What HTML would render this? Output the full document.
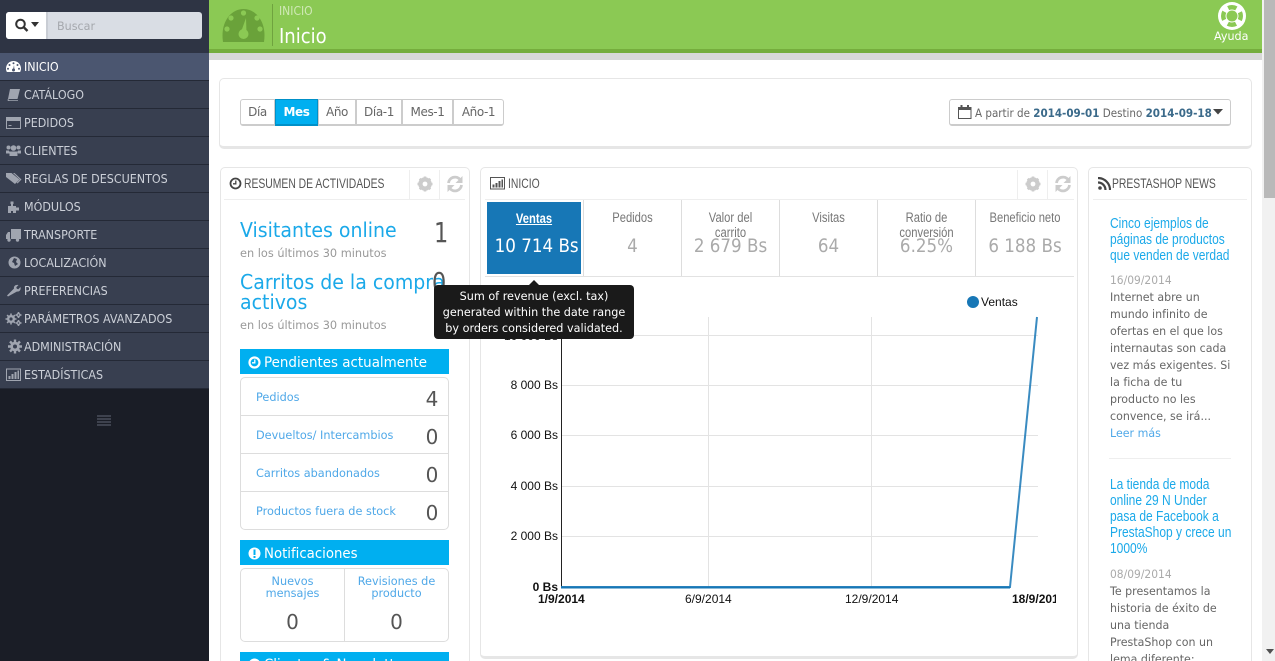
<!DOCTYPE html>
<html lang="es"><head><meta charset="utf-8"><title>Inicio</title>
<style>
html,body{margin:0;padding:0;width:1275px;height:661px;overflow:hidden;background:#fff}
body{position:relative;font-family:"Liberation Sans",sans-serif}
div,span,svg{position:absolute}
.t{white-space:nowrap;transform-origin:0 50%;font-family:"DejaVu Sans",sans-serif}
.c{white-space:nowrap;text-align:center;font-family:"DejaVu Sans",sans-serif}
.n{white-space:nowrap;transform-origin:0 50%;font-family:"Liberation Sans",sans-serif;color:#555}
.m{left:0;width:209px;height:27px;background:#383f50;border-bottom:1px solid #242936}
.m .t{left:24px;top:6px;line-height:15px;font-size:12.5px;color:#ccd0d8;transform:scaleX(.89)}
.m svg{left:5px;top:5px;width:17px;height:17px;fill:#a0a5b0}
.panel{background:#fff;border:1px solid #e6e6e6;border-radius:5px;box-sizing:border-box}
.sep{width:1px;background:#eee}
.seg{top:99px;height:27px;box-sizing:border-box;border:1px solid #ccc;border-bottom:2px solid #ccc;margin-left:-1px;text-align:center;font:12px/25px "DejaVu Sans",sans-serif;color:#666;letter-spacing:-.4px;background:#fff}
.bar{left:240px;width:209px;height:25px;background:#00aff0}
.lab{left:256px;font-size:11.5px;line-height:14px;color:#4fa8e8;transform:scaleX(.98)}
.val{left:424px;width:16px;text-align:center;font:20px/24px "DejaVu Sans",sans-serif;color:#555}
.kt{line-height:15px;font-size:13.5px;color:#777;transform:scaleX(.83);font-family:"Liberation Sans",sans-serif}
.kv{line-height:24px;font-size:19px;color:#aaa;font-family:"DejaVu Sans",sans-serif;transform:scaleX(.88)}
.body{left:1110px;font-size:11.5px;line-height:17px;color:#666;transform:scaleX(.96)}
.ttl{left:1110px;font:15px/16px "Liberation Sans",sans-serif;color:#1ba9e9;transform:scaleX(.8);white-space:nowrap;transform-origin:0 50%}
.h{top:175px;font:14px/16px "Liberation Sans",sans-serif;color:#555;white-space:nowrap;transform-origin:0 50%;transform:scaleX(.74)}
.ya{left:480px;width:78px;text-align:right;font:12px/14px "Liberation Sans",sans-serif;color:#111;white-space:nowrap}
</style></head><body>

<!-- sidebar -->
<div style="left:0;top:0;width:209px;height:661px;background:#1a1d26"></div>
<div style="left:0;top:0;width:209px;height:53px;background:#2e3444"></div>
<div style="left:6px;top:12px;width:196px;height:27px;background:#d9dde4;border-radius:3px"></div>
<div style="left:6px;top:12px;width:42px;height:27px;background:#fff;border-radius:3px 0 0 3px;border-right:2px solid #c9cdd4;box-sizing:border-box"></div>
<svg style="left:14px;top:17px" width="28" height="16" viewBox="0 0 28 16"><circle cx="6.500" cy="7" r="4.300" fill="none" stroke="#333" stroke-width="2"/><path d="M9.500 10l4 4" stroke="#333" stroke-width="2.400"/><path d="M17 5h8l-4 5z" fill="#333"/></svg>
<span class="t" style="left:57px;top:19px;font-size:11.500px;line-height:15px;color:#a5a8ad;transform:scaleX(.97)">Buscar</span>

<div class="m" style="top:53px;background:#4b5670"><svg viewBox="0 0 17 17" style="fill:#fff"><path d="M8.500 3C4.300 3 1 6.400 1 10.500c0 1.300.3 2.500.9 3.500h13.200c.6-1 .9-2.200.9-3.500C16 6.400 12.700 3 8.500 3z"/><g fill="#4b5670"><circle cx="8.500" cy="5.300" r="1"/><circle cx="4.500" cy="7" r="1"/><circle cx="12.500" cy="7" r="1"/><circle cx="3" cy="10.800" r="1"/><circle cx="14" cy="10.800" r="1"/><circle cx="8.500" cy="12" r="1.500"/><path d="M8 12l1-5 .5 5z"/></g></svg><span class="t" style="color:#fff">INICIO</span></div>
<div class="m" style="top:81px"><svg viewBox="0 0 17 17"><path d="M5 3h10l-2.500 10H3.500q-1 0-1 1t1 1h9.500v-.8H4.500L3 13z"/></svg><span class="t">CATÁLOGO</span></div>
<div class="m" style="top:109px"><svg viewBox="0 0 17 17"><path d="M1 3h15v12H1zM2 7v7h13V7zM3.500 11h3v1h-3z" fill-rule="evenodd"/></svg><span class="t">PEDIDOS</span></div>
<div class="m" style="top:137px"><svg viewBox="0 0 17 17"><circle cx="3.500" cy="5.500" r="2"/><circle cx="13.500" cy="5.500" r="2"/><circle cx="8.500" cy="6" r="2.800"/><path d="M1 8.500h3l1 3H1zM16 8.500h-3l-1 3h4zM4.500 9.500h8V14h-8z"/></svg><span class="t">CLIENTES</span></div>
<div class="m" style="top:165px"><svg viewBox="0 0 17 17"><path d="M1 3h5.500l8 6.500-4.500 4.500-9-7z"/><path d="M8 3h1.500l7 6.500-4 4-.8-.7 3.200-3.300z"/></svg><span class="t">REGLAS DE DESCUENTOS</span></div>
<div class="m" style="top:193px"><svg viewBox="0 0 17 17"><path d="M3 8h3V6h-.5V3.500h3V6H8v2h3v7H8v-2H6v2H3z"/><path d="M11 9.500h3v3h-3z"/></svg><span class="t">MÓDULOS</span></div>
<div class="m" style="top:221px"><svg viewBox="0 0 17 17"><path d="M6 3h10v10H6zM5 6H3L1 9v4h4z"/><circle cx="4" cy="14" r="1.700"/><circle cx="12.500" cy="14" r="1.700"/></svg><span class="t">TRANSPORTE</span></div>
<div class="m" style="top:249px"><svg viewBox="0 0 17 17"><circle cx="9.500" cy="8.500" r="6"/><path d="M9 4l3 1-1 3 2 2-3 2-1-3-2-1z" fill="#383f50"/></svg><span class="t">LOCALIZACIÓN</span></div>
<div class="m" style="top:277px"><svg viewBox="0 0 17 17"><path d="M3 14.500l-1-1 7-7c-.5-2.200 1.500-4.300 4.500-3.500l-2.200 2.200.5 1.500 1.500.5 2.200-2.200c.8 3-1.300 5-3.500 4.500z"/></svg><span class="t">PREFERENCIAS</span></div>
<div class="m" style="top:305px"><svg viewBox="0 0 17 17"><path d="M6 3.500v11M.5 9h11M2.100 5.100l7.800 7.800M9.900 5.100l-7.800 7.800M13.500 2v6M13.500 10v6M10.500 5h6M10.500 13h6" stroke="#a0a5b0" stroke-width="1.600"/><circle cx="6" cy="9" r="4"/><circle cx="6" cy="9" r="1.600" fill="#383f50"/><circle cx="13.500" cy="5" r="2.100"/><circle cx="13.500" cy="13" r="2.100"/><circle cx="13.500" cy="5" r=".8" fill="#383f50"/><circle cx="13.500" cy="13" r=".8" fill="#383f50"/></svg><span class="t">PARÁMETROS AVANZADOS</span></div>
<div class="m" style="top:333px"><svg viewBox="0 0 17 17"><path d="M10 1.500v14M3 8.500h14M5 3.500l10 10M15 3.500l-10 10" stroke="#a0a5b0" stroke-width="2.400"/><circle cx="10" cy="8.500" r="4.800"/><circle cx="10" cy="8.500" r="2" fill="#383f50"/></svg><span class="t">ADMINISTRACIÓN</span></div>
<div class="m" style="top:361px"><svg viewBox="0 0 17 17"><path d="M1 2.500h15v12.500H1zM2 3.500v10.500h13V3.500z" fill-rule="evenodd"/><path d="M3.500 10h2v3h-2zM6.500 8h2v5h-2zM9.500 6h2v7h-2zM12.500 4.500h1.500V13h-1.500z"/></svg><span class="t">ESTADÍSTICAS</span></div>
<svg style="left:97px;top:415px" width="14" height="12"><path d="M0 1h14M0 4h14M0 7h14M0 10h14" stroke="#4a4f5c" stroke-width="1.500"/></svg>

<!-- top -->
<div style="left:209px;top:0;width:1053px;height:49px;background:#8bc954"></div>
<div style="left:209px;top:49px;width:1053px;height:4px;background:#75ad3d"></div>
<div style="left:209px;top:53px;width:1053px;height:7px;background:#d8d8d8"></div>
<svg style="left:222px;top:8px" width="43" height="35" viewBox="0 0 43 35"><path d="M1 34C-2 14 9 1 21.500 1S45 14 42 34z" fill="#6aa23a"/><g fill="#8bc954"><circle cx="21.500" cy="5" r="2.600"/><circle cx="9" cy="10" r="2.600"/><circle cx="35" cy="10" r="2.600"/><circle cx="5" cy="21" r="2.600"/><circle cx="38" cy="21" r="2.600"/><circle cx="21.500" cy="26" r="5"/><path d="M19 24l5-14 .5 15z"/></g></svg>
<div style="left:272px;top:4px;width:1px;height:42px;background:#6fa33f"></div>
<span class="t" style="left:279px;top:4px;font-size:12px;line-height:15px;color:#cfe8b5;transform:scaleX(.9)">INICIO</span>
<span class="t" style="left:279px;top:24px;font-size:20px;line-height:24px;color:#fff;transform:scaleX(.9)">Inicio</span>
<svg style="left:1216px;top:1px" width="32" height="30" viewBox="0 0 32 30"><circle cx="16" cy="15" r="14" fill="#fff"/><circle cx="16" cy="15" r="8.750" fill="none" stroke="#8bc954" stroke-width="4.500" stroke-dasharray="8.500 5.250" stroke-dashoffset="4.250"/><circle cx="16" cy="15" r="5.500" fill="#8bc954"/></svg>
<span class="t" style="left:1214px;top:29px;font-size:11.500px;line-height:15px;color:#fff;transform:scaleX(.97)">Ayuda</span>

<!-- scrollbar -->
<div style="left:1262px;top:0;width:13px;height:661px;background:#f1f1f1"></div>
<div style="left:1264px;top:0;width:11px;height:198px;background:#b9b9b9"></div>
<svg style="left:1266px;top:649px" width="8" height="6"><path d="M0 0h8L4 5z" fill="#505050"/></svg>

<!-- date panel -->
<div class="panel" style="left:219px;top:78px;width:1033px;height:71px;border-bottom-width:3px"></div>
<div class="seg" style="left:241px;width:35px;border-radius:3px 0 0 3px">Día</div>
<div class="seg" style="left:276px;width:43px;background:#00aff0;border-color:#0090c8;color:#fff;font-weight:bold;z-index:2">Mes</div>
<div class="seg" style="left:319px;width:38px">Año</div>
<div class="seg" style="left:357px;width:46px">Día-1</div>
<div class="seg" style="left:403px;width:51px">Mes-1</div>
<div class="seg" style="left:454px;width:51px;border-radius:0 3px 3px 0">Año-1</div>

<div style="left:949px;top:99px;width:282px;height:27px;box-sizing:border-box;border:1px solid #ccc;border-bottom:2px solid #ccc;border-radius:3px;background:#fff"></div>
<svg style="left:958px;top:105px" width="14" height="14" viewBox="0 0 14 14"><path d="M.5 2.500h12.500v11H.5z" fill="none" stroke="#555"/><path d="M.5 2.500h12.500V5H.5z" fill="#555"/><path d="M3.500 0v3M10 0v3" stroke="#555" stroke-width="2"/></svg>
<span class="t" style="left:975px;top:106px;font-size:11.500px;line-height:14px;color:#666;transform:scaleX(.9)">A partir de <b style="color:#3b6a8a">2014-09-01</b> Destino <b style="color:#3b6a8a">2014-09-18</b></span>
<svg style="left:1213px;top:109px" width="11" height="6"><path d="M0 0h10L5 5.500z" fill="#444"/></svg>

<!-- left panel -->
<div class="panel" style="left:220px;top:167px;width:250px;height:520px"></div>
<div class="sep" style="left:224px;top:199px;width:241px;height:1px"></div>
<div class="sep" style="left:409px;top:170px;height:29px"></div>
<div class="sep" style="left:439px;top:170px;height:29px"></div>
<svg style="left:229px;top:177px" width="13" height="13" viewBox="0 0 13 13"><circle cx="6.500" cy="6.500" r="5" fill="none" stroke="#444" stroke-width="1.800"/><path d="M6.800 3.500v3.300H4" fill="none" stroke="#444" stroke-width="1.300"/></svg>
<span class="h" style="left:244px">RESUMEN DE ACTIVIDADES</span>
<svg style="left:416px;top:175px" width="18" height="18" viewBox="0 0 18 18"><circle cx="9" cy="9" r="5" fill="none" stroke="#ccc" stroke-width="3.500"/><path d="M9 1.500v15M1.500 9h15M3.700 3.700l10.600 10.600M14.300 3.700L3.700 14.300" stroke="#ccc" stroke-width="2.500"/><circle cx="9" cy="9" r="2.400" fill="#fff"/></svg>
<svg style="left:446px;top:175px" width="18" height="18" viewBox="0 0 18 18"><path d="M2.500 8A6.500 6.500 0 0 1 14 4.500M15.500 10A6.500 6.500 0 0 1 4 13.500" fill="none" stroke="#ccc" stroke-width="2.800"/><path d="M16.500 1v7h-7zM1.500 17v-7h7z" fill="#ccc"/></svg>

<span class="t" style="left:240px;top:218px;font-size:20px;line-height:24px;color:#1ba9e9;transform:scaleX(.947)">Visitantes online</span>
<span class="t" style="left:434px;top:216px;font-size:28px;line-height:34px;color:#555;transform:scaleX(.8)">1</span>
<span class="t" style="left:240px;top:246px;font-size:11.500px;line-height:14px;color:#999;transform:scaleX(.985)">en los últimos 30 minutos</span>
<span class="t" style="left:240px;top:270px;font-size:20px;line-height:24px;color:#1ba9e9;transform:scaleX(.947)">Carritos de la compra</span>
<span class="t" style="left:240px;top:290px;font-size:20px;line-height:24px;color:#1ba9e9;transform:scaleX(.947)">activos</span>
<span class="t" style="left:432px;top:266px;font-size:28px;line-height:34px;color:#555;transform:scaleX(.8)">0</span>
<span class="t" style="left:240px;top:318px;font-size:11.500px;line-height:14px;color:#999;transform:scaleX(.985)">en los últimos 30 minutos</span>

<div class="bar" style="top:349px"></div>
<svg style="left:248px;top:356px" width="13" height="13" viewBox="0 0 13 13"><circle cx="6.500" cy="6.500" r="5" fill="none" stroke="#fff" stroke-width="2.200"/><path d="M6.800 3.500v3.300H4" fill="none" stroke="#fff" stroke-width="1.300"/></svg>
<span class="t" style="left:264px;top:355px;font-size:14px;line-height:17px;color:#fff;transform:scaleX(.96)">Pendientes actualmente</span>

<div class="panel" style="left:240px;top:377px;width:209px;height:153px;border-color:#ddd"></div>
<div style="left:241px;top:415px;width:207px;height:1px;background:#ddd"></div>
<div style="left:241px;top:453px;width:207px;height:1px;background:#ddd"></div>
<div style="left:241px;top:491px;width:207px;height:1px;background:#ddd"></div>
<span class="t lab" style="top:390px">Pedidos</span><span class="c val" style="top:387px">4</span>
<span class="t lab" style="top:428px">Devueltos/ Intercambios</span><span class="c val" style="top:425px">0</span>
<span class="t lab" style="top:466px">Carritos abandonados</span><span class="c val" style="top:463px">0</span>
<span class="t lab" style="top:504px">Productos fuera de stock</span><span class="c val" style="top:501px">0</span>

<div class="bar" style="top:540px"></div>
<svg style="left:248px;top:547px" width="13" height="13" viewBox="0 0 13 13"><circle cx="6.500" cy="6.500" r="6" fill="#fff"/><path d="M5.500 2.500h2v5.500h-2zM5.500 9h2v2h-2z" fill="#00aff0"/></svg>
<span class="t" style="left:264px;top:546px;font-size:14px;line-height:17px;color:#fff;transform:scaleX(.95)">Notificaciones</span>
<div class="panel" style="left:240px;top:568px;width:209px;height:74px;border-color:#ddd"></div>
<div style="left:344px;top:569px;width:1px;height:72px;background:#ddd"></div>
<div class="c" style="left:241px;top:575px;width:103px;font-size:11.500px;line-height:12px;color:#4fa8e8;transform:scaleX(.98)">Nuevos<br>mensajes</div>
<div class="c" style="left:345px;top:575px;width:103px;font-size:11.500px;line-height:12px;color:#4fa8e8;transform:scaleX(.98)">Revisiones de<br>producto</div>
<div class="c" style="left:241px;top:610px;width:103px;font-size:20px;line-height:24px;color:#555">0</div>
<div class="c" style="left:345px;top:610px;width:103px;font-size:20px;line-height:24px;color:#555">0</div>
<div class="bar" style="top:652px;height:9px;overflow:hidden"><svg style="left:8px;top:6px" width="13" height="13" viewBox="0 0 13 13"><circle cx="6.500" cy="6.500" r="6" fill="#fff"/></svg><span class="t" style="left:24px;top:5px;font-size:14px;line-height:17px;color:#fff;transform:scaleX(.95)">Clientes &amp; Newsletters</span></div>

<!-- center panel -->
<div class="panel" style="left:480px;top:167px;width:598px;height:492px;border-bottom-width:3px"></div>
<div class="sep" style="left:485px;top:199px;width:589px;height:1px"></div>
<div class="sep" style="left:1017px;top:170px;height:29px"></div>
<div class="sep" style="left:1047px;top:170px;height:29px"></div>
<svg style="left:490px;top:177px" width="15" height="13" viewBox="0 0 15 13"><path d="M.5.500h14v11.500H.5z" fill="none" stroke="#555"/><path d="M2.500 7.500h2v3h-2zM5.500 6h2v4.500h-2zM8.500 4h2v6.500h-2zM11.500 2.500h1.500v8h-1.500z" fill="#555"/></svg>
<span class="h" style="left:508px">INICIO</span>
<svg style="left:1024px;top:175px" width="18" height="18" viewBox="0 0 18 18"><circle cx="9" cy="9" r="5" fill="none" stroke="#ccc" stroke-width="3.500"/><path d="M9 1.500v15M1.500 9h15M3.700 3.700l10.600 10.600M14.300 3.700L3.700 14.300" stroke="#ccc" stroke-width="2.500"/><circle cx="9" cy="9" r="2.400" fill="#fff"/></svg>
<svg style="left:1054px;top:175px" width="18" height="18" viewBox="0 0 18 18"><path d="M2.500 8A6.500 6.500 0 0 1 14 4.500M15.500 10A6.500 6.500 0 0 1 4 13.500" fill="none" stroke="#ccc" stroke-width="2.800"/><path d="M16.500 1v7h-7zM1.500 17v-7h7z" fill="#ccc"/></svg>

<div style="left:487px;top:202px;width:94px;height:72px;background:#1777b6"></div>
<div style="left:485px;top:276px;width:589px;height:1px;background:#e2e2e2"></div>
<div style="left:583px;top:200px;width:1px;height:76px;background:#ddd"></div>
<div style="left:681px;top:200px;width:1px;height:76px;background:#ddd"></div>
<div style="left:779px;top:200px;width:1px;height:76px;background:#ddd"></div>
<div style="left:877px;top:200px;width:1px;height:76px;background:#ddd"></div>
<div style="left:975px;top:200px;width:1px;height:76px;background:#ddd"></div>

<div class="c kt" style="left:487px;width:94px;top:211px;color:#fff;font-weight:bold;text-decoration:underline">Ventas</div>
<div class="c kv" style="left:489px;width:94px;top:234px;color:#fff">10 714 Bs</div>
<div class="c kt" style="left:584px;width:97px;top:210px">Pedidos</div>
<div class="c kv" style="left:584px;width:97px;top:234px">4</div>
<div class="c kt" style="left:682px;width:97px;top:210px">Valor del<br>carrito</div>
<div class="c kv" style="left:682px;width:97px;top:234px">2 679 Bs</div>
<div class="c kt" style="left:780px;width:97px;top:210px">Visitas</div>
<div class="c kv" style="left:780px;width:97px;top:234px">64</div>
<div class="c kt" style="left:878px;width:97px;top:210px">Ratio de<br>conversión</div>
<div class="c kv" style="left:878px;width:97px;top:234px">6.25%</div>
<div class="c kt" style="left:976px;width:98px;top:210px">Beneficio neto</div>
<div class="c kv" style="left:976px;width:98px;top:234px">6 188 Bs</div>

<!-- chart -->
<svg style="left:480px;top:280px" width="598" height="340" viewBox="480 280 598 340">
<g stroke="#e3e3e3" stroke-width="1" shape-rendering="crispEdges"><path d="M561 335.500h477M561 385.500h477M561 435.500h477M561 486.500h477M561 536.500h477M708.500 317v270M871.500 317v270"/></g>
<path d="M561.500 317v270" stroke="#222" shape-rendering="crispEdges"/>
<path d="M561 587h449L1037 317" fill="none" stroke="#1777b6" stroke-width="2" opacity=".85"/>
<path d="M561 587.500h449" stroke="#1777b6" stroke-width="2"/>
<circle cx="973" cy="302" r="6" fill="#1777b6"/>
</svg>
<span class="n" style="left:981px;top:295px;font-size:12px;line-height:14px;color:#111">Ventas</span>
<div class="ya" style="top:310px">10 714 Bs</div>
<div class="ya" style="top:329px">10 000 Bs</div>
<div class="ya" style="top:378px">8 000 Bs</div>
<div class="ya" style="top:428px">6 000 Bs</div>
<div class="ya" style="top:479px">4 000 Bs</div>
<div class="ya" style="top:529px">2 000 Bs</div>
<div class="ya" style="top:580px;font-weight:bold">0 Bs</div>
<span class="n" style="left:538px;top:592px;font-size:12px;line-height:14px;color:#111;font-weight:bold">1/9/2014</span>
<span class="n" style="left:685px;top:592px;font-size:12px;line-height:14px;color:#111">6/9/2014</span>
<span class="n" style="left:845px;top:592px;font-size:12px;line-height:14px;color:#111">12/9/2014</span>
<div style="left:1000px;top:592px;width:56px;height:14px;overflow:hidden"><span class="n" style="left:12px;top:0;font-size:12px;line-height:14px;color:#111;font-weight:bold">18/9/2014</span></div>

<!-- tooltip -->
<div style="left:434px;top:285px;width:200px;height:54px;background:#1a1a1a;border-radius:4px;z-index:5"></div>
<svg style="left:528px;top:280px;z-index:5" width="12" height="6"><path d="M0 6L6 0l6 6z" fill="#1a1a1a"/></svg>
<div class="c" style="left:434px;top:288px;width:200px;font-size:11.500px;line-height:16px;color:#fff;z-index:6;transform:scaleX(.975)">Sum of revenue (excl. tax)<br>generated within the date range<br>by orders considered validated.</div>

<!-- news -->
<div class="panel" style="left:1088px;top:167px;width:164px;height:520px"></div>
<div class="sep" style="left:1093px;top:199px;width:154px;height:1px"></div>
<svg style="left:1098px;top:177px" width="13" height="13" viewBox="0 0 13 13"><circle cx="2" cy="11" r="1.800" fill="#444"/><path d="M0 5.500a7.500 7.500 0 0 1 7.500 7.500M0 1a12 12 0 0 1 12 12" fill="none" stroke="#444" stroke-width="2.200"/></svg>
<span class="h" style="left:1112px">PRESTASHOP NEWS</span>
<div class="ttl" style="top:216px">Cinco ejemplos de</div>
<div class="ttl" style="top:232px">páginas de productos</div>
<div class="ttl" style="top:248px">que venden de verdad</div>
<span class="t" style="left:1110px;top:273px;font-size:11.500px;line-height:14px;color:#aaa;transform:scaleX(.93)">16/09/2014</span>
<span class="t body" style="top:289px">Internet abre un</span>
<span class="t body" style="top:306px">mundo infinito de</span>
<span class="t body" style="top:323px">ofertas en el que los</span>
<span class="t body" style="top:340px">internautas son cada</span>
<span class="t body" style="top:357px">vez más exigentes. Si</span>
<span class="t body" style="top:374px">la ficha de tu</span>
<span class="t body" style="top:391px">producto no les</span>
<span class="t body" style="top:408px">convence, se irá...</span>
<span class="t body" style="top:425px;color:#4fa8e8">Leer más</span>
<div class="sep" style="left:1109px;top:458px;width:122px;height:1px"></div>
<div class="ttl" style="top:477px">La tienda de moda</div>
<div class="ttl" style="top:493px">online 29 N Under</div>
<div class="ttl" style="top:509px">pasa de Facebook a</div>
<div class="ttl" style="top:525px">PrestaShop y crece un</div>
<div class="ttl" style="top:541px">1000%</div>
<span class="t" style="left:1110px;top:567px;font-size:11.500px;line-height:14px;color:#aaa;transform:scaleX(.93)">08/09/2014</span>
<span class="t body" style="top:583px">Te presentamos la</span>
<span class="t body" style="top:600px">historia de éxito de</span>
<span class="t body" style="top:617px">una tienda</span>
<span class="t body" style="top:634px">PrestaShop con un</span>
<span class="t body" style="top:651px">lema diferente:</span>
</body></html>
